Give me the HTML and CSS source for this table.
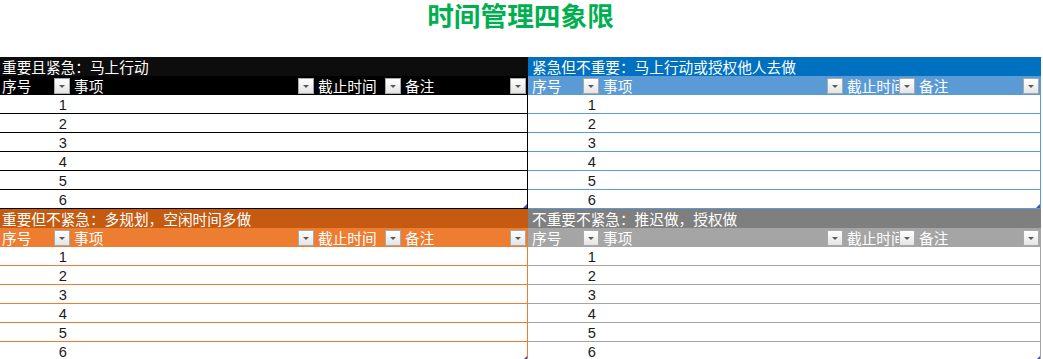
FILE: index.html
```html
<!DOCTYPE html>
<html lang="zh-CN">
<head>
<meta charset="utf-8">
<title>时间管理四象限</title>
<link rel="stylesheet" href="styles.css">
</head>
<body>
<h1 class="title">时间管理四象限</h1>
<div class="board">
  <section class="quad left black">
    <div class="qtitle">重要且紧急：马上行动</div>
    <div class="row head">
      <div class="cell">序号<span class="dd"></span></div>
      <div class="cell">事项<span class="dd"></span></div>
      <div class="cell">截止时间<span class="dd"></span></div>
      <div class="cell">备注<span class="dd"></span></div>
    </div>
    <div class="row"><div class="cell num">1</div><div class="cell"></div><div class="cell"></div><div class="cell"></div></div>
    <div class="row"><div class="cell num">2</div><div class="cell"></div><div class="cell"></div><div class="cell"></div></div>
    <div class="row"><div class="cell num">3</div><div class="cell"></div><div class="cell"></div><div class="cell"></div></div>
    <div class="row"><div class="cell num">4</div><div class="cell"></div><div class="cell"></div><div class="cell"></div></div>
    <div class="row"><div class="cell num">5</div><div class="cell"></div><div class="cell"></div><div class="cell"></div></div>
    <div class="row last"><div class="cell num">6</div><div class="cell"></div><div class="cell"></div><div class="cell"></div><span class="grip"></span></div>
  </section>
  <section class="quad right blue">
    <div class="qtitle">紧急但不重要：马上行动或授权他人去做</div>
    <div class="row head">
      <div class="cell">序号<span class="dd"></span></div>
      <div class="cell">事项<span class="dd"></span></div>
      <div class="cell">截止时间<span class="dd"></span></div>
      <div class="cell">备注<span class="dd"></span></div>
    </div>
    <div class="row"><div class="cell num">1</div><div class="cell"></div><div class="cell"></div><div class="cell"></div></div>
    <div class="row"><div class="cell num">2</div><div class="cell"></div><div class="cell"></div><div class="cell"></div></div>
    <div class="row"><div class="cell num">3</div><div class="cell"></div><div class="cell"></div><div class="cell"></div></div>
    <div class="row"><div class="cell num">4</div><div class="cell"></div><div class="cell"></div><div class="cell"></div></div>
    <div class="row"><div class="cell num">5</div><div class="cell"></div><div class="cell"></div><div class="cell"></div></div>
    <div class="row last"><div class="cell num">6</div><div class="cell"></div><div class="cell"></div><div class="cell"></div><span class="grip"></span></div>
  </section>
  <section class="quad left orange">
    <div class="qtitle">重要但不紧急：多规划，空闲时间多做</div>
    <div class="row head">
      <div class="cell">序号<span class="dd"></span></div>
      <div class="cell">事项<span class="dd"></span></div>
      <div class="cell">截止时间<span class="dd"></span></div>
      <div class="cell">备注<span class="dd"></span></div>
    </div>
    <div class="row"><div class="cell num">1</div><div class="cell"></div><div class="cell"></div><div class="cell"></div></div>
    <div class="row"><div class="cell num">2</div><div class="cell"></div><div class="cell"></div><div class="cell"></div></div>
    <div class="row"><div class="cell num">3</div><div class="cell"></div><div class="cell"></div><div class="cell"></div></div>
    <div class="row"><div class="cell num">4</div><div class="cell"></div><div class="cell"></div><div class="cell"></div></div>
    <div class="row"><div class="cell num">5</div><div class="cell"></div><div class="cell"></div><div class="cell"></div></div>
    <div class="row last"><div class="cell num">6</div><div class="cell"></div><div class="cell"></div><div class="cell"></div><span class="grip"></span></div>
  </section>
  <section class="quad right grey">
    <div class="qtitle">不重要不紧急：推迟做，授权做</div>
    <div class="row head">
      <div class="cell">序号<span class="dd"></span></div>
      <div class="cell">事项<span class="dd"></span></div>
      <div class="cell">截止时间<span class="dd"></span></div>
      <div class="cell">备注<span class="dd"></span></div>
    </div>
    <div class="row"><div class="cell num">1</div><div class="cell"></div><div class="cell"></div><div class="cell"></div></div>
    <div class="row"><div class="cell num">2</div><div class="cell"></div><div class="cell"></div><div class="cell"></div></div>
    <div class="row"><div class="cell num">3</div><div class="cell"></div><div class="cell"></div><div class="cell"></div></div>
    <div class="row"><div class="cell num">4</div><div class="cell"></div><div class="cell"></div><div class="cell"></div></div>
    <div class="row"><div class="cell num">5</div><div class="cell"></div><div class="cell"></div><div class="cell"></div></div>
    <div class="row last"><div class="cell num">6</div><div class="cell"></div><div class="cell"></div><div class="cell"></div><span class="grip"></span></div>
  </section>
</div>
</body>
</html>
```

FILE: styles.css
```css
html, body {
  margin: 0;
  padding: 0;
  background: #ffffff;
}

body {
  width: 1043px;
  font-family: "Noto Sans CJK SC", "Liberation Sans", sans-serif;
}

.title {
  margin: 0;
  width: 1041px;
  height: 57px;
  line-height: 30px;
  text-align: center;
  font-size: 26.67px;
  font-weight: 700;
  color: #00b050;
}

.board {
  display: grid;
  grid-template-columns: 528px 513px;
}

.quad {
  display: flex;
  flex-direction: column;
}

.qtitle {
  height: 19px;
  box-sizing: border-box;
  padding-top: 1px;
  line-height: 18px;
  padding-left: 2px;
  font-size: 14.67px;
  color: #ffffff;
  white-space: nowrap;
}

.right .qtitle {
  padding-left: 4px;
}

.row {
  display: grid;
  height: 19px;
  box-sizing: border-box;
  border-bottom: 1px solid #000;
  border-right: 1px solid #000;
  position: relative;
}

.left .row {
  grid-template-columns: 71px 244px 87px 125px;
}

.right .row {
  grid-template-columns: 72px 244px 72px 124px;
}

.row.head {
  border: 0;
  height: 19px;
}

.cell {
  position: relative;
  font-size: 14.67px;
  white-space: nowrap;
}

.head .cell {
  box-sizing: border-box;
  height: 19px;
  padding-top: 1px;
  line-height: 18px;
  color: #ffffff;
  padding-left: 3px;
}

.left .head .cell:first-child {
  padding-left: 2px;
}

.right .head .cell:first-child {
  padding-left: 4px;
}

.num {
  font-family: "Liberation Sans", "Noto Sans CJK SC", sans-serif;
  text-align: right;
  padding-right: 4px;
  line-height: 16px;
  padding-top: 2px;
  height: 18px;
  box-sizing: border-box;
  color: #1a1a1a;
}

.dd {
  position: absolute;
  right: 1px;
  top: 2px;
  width: 16px;
  height: 16px;
  box-sizing: border-box;
  border: 1px solid #a9a9a9;
  background: linear-gradient(#ffffff, #e4e4e4);
}

.dd::after {
  content: "";
  position: absolute;
  left: 4px;
  top: 6px;
  width: 0;
  height: 0;
  border-left: 3px solid transparent;
  border-right: 3px solid transparent;
  border-top: 3px solid #5a5a5a;
}

.grip {
  position: absolute;
  right: 0;
  bottom: 0;
  width: 4px;
  height: 4px;
  background: #3a56b4;
  clip-path: polygon(100% 0, 100% 100%, 0 100%);
}

/* colour themes */
.black .qtitle { background: #0d0d0d; }
.black .head { background: #000000; }
.black .row { border-color: #000000; }

.blue .qtitle { background: #0070c0; }
.blue .head { background: #5b9bd5; }
.blue .row { border-color: #5b9bd5; }

.orange .qtitle { background: #c55a11; }
.orange .head { background: #ed7d31; }
.orange .row { border-color: #ed7d31; }

.grey .qtitle { background: #7f7f7f; }
.grey .head { background: #a5a5a5; }
.grey .row { border-color: #a5a5a5; }
```
